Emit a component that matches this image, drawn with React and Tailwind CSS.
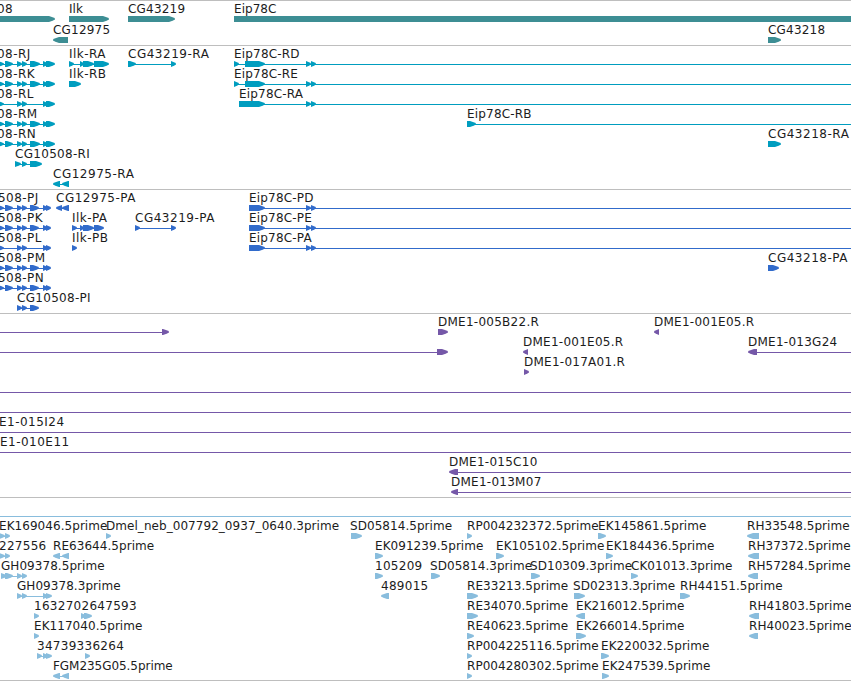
import clsx from "clsx";

const VIEW_END = 851;

// x: label position, blocks: [start, end], line: connector between the blocks
const feature = (label, x, blocks = [], options = {}) => ({
  label,
  x,
  blocks,
  ...options,
});

const eip = { line: [235, VIEW_END] };
const left = { reverse: true };

const rnaExons = [[-3, 4], [5, 13], [17, 22], [22, 27], [30, 40], [43, 48], [46, 55]];
const rnaShort = [[-3, 4], [17, 22], [22, 27], [43, 48], [46, 55]];
const cdsExons = [[-3, 4], [5, 13], [17, 22], [22, 27], [30, 39], [43, 48], [46, 51]];
const cdsShort = [[-3, 4], [17, 22], [22, 27], [43, 48], [46, 51]];

const tracks = [
  {
    id: "genes",
    color: "text-[#3d8e94]",
    height: "h-[45px]",
    rowHeight: "h-[21px]",
    rows: [
      [
        feature("08", -3, [[-5, 55]]),
        feature("Ilk", 69, [[69, 109]]),
        feature("CG43219", 128, [[128, 175]]),
        feature("Eip78C", 234, [[234, 870]]),
      ],
      [
        feature("CG12975", 53, [[53, 68]], left),
        feature("CG43218", 768, [[768, 781]]),
      ],
    ],
  },
  {
    id: "transcripts",
    color: "text-[#009dbf]",
    height: "h-36",
    rows: [
      [
        feature("08-RJ", -3, rnaExons, { line: [0, 50] }),
        feature("Ilk-RA", 69, [[69, 74], [80, 84], [83, 94], [94, 109]], { line: [69, 105] }),
        feature("CG43219-RA", 128, [[128, 136], [171, 176]], { line: [128, 173] }),
        feature("Eip78C-RD", 234, [[234, 239], [245, 265], [306, 311], [311, 316]], eip),
      ],
      [
        feature("08-RK", -3, rnaExons, { line: [0, 50] }),
        feature("Ilk-RB", 69, [[69, 81]]),
        feature("Eip78C-RE", 234, [[234, 239], [245, 265], [306, 311], [311, 316]], eip),
      ],
      [
        feature("08-RL", -3, rnaShort, { line: [0, 50] }),
        feature("Eip78C-RA", 239, [[239, 265], [306, 311], [311, 316]], { line: [240, VIEW_END] }),
      ],
      [
        feature("08-RM", -3, rnaExons, { line: [0, 50] }),
        feature("Eip78C-RB", 467, [[467, 476]], { line: [468, VIEW_END] }),
      ],
      [
        feature("08-RN", -3, rnaExons, { line: [0, 50] }),
        feature("CG43218-RA", 768, [[768, 781]]),
      ],
      [feature("CG10508-RI", 15, [[15, 21], [22, 27], [30, 42]], { line: [15, 38] })],
      [feature("CG12975-RA", 53, [[53, 60], [62, 69]], { ...left, line: [56, 68] })],
    ],
  },
  {
    id: "proteins",
    color: "text-[#316bcb]",
    height: "h-[124px]",
    rows: [
      [
        feature("508-PJ", -2, cdsExons, { line: [0, 48] }),
        feature("CG12975-PA", 56, [[56, 62], [62, 69]], { ...left, line: [58, 68] }),
        feature("Eip78C-PD", 249, [[249, 265], [306, 311], [311, 316]], { line: [250, VIEW_END] }),
      ],
      [
        feature("508-PK", -2, cdsExons, { line: [0, 48] }),
        feature("Ilk-PA", 72, [[72, 77], [80, 84], [83, 94], [94, 104]], { line: [72, 100] }),
        feature("CG43219-PA", 135, [[135, 140], [171, 176]], { line: [135, 173] }),
        feature("Eip78C-PE", 249, [[249, 265], [306, 311], [311, 316]], { line: [250, VIEW_END] }),
      ],
      [
        feature("508-PL", -2, cdsShort, { line: [0, 48] }),
        feature("Ilk-PB", 72, [[72, 77]]),
        feature("Eip78C-PA", 249, [[249, 265], [306, 311], [311, 316]], { line: [250, VIEW_END] }),
      ],
      [
        feature("508-PM", -2, cdsExons, { line: [0, 48] }),
        feature("CG43218-PA", 768, [[768, 779]]),
      ],
      [feature("508-PN", -2, cdsExons, { line: [0, 48] })],
      [feature("CG10508-PI", 17, [[17, 22], [22, 27], [30, 39]], { line: [17, 36] })],
    ],
  },
  {
    id: "clones",
    color: "text-[#7558a8]",
    height: "h-[184px]",
    rows: [
      [
        feature("", 0, [[162, 169]], { line: [0, 165] }),
        feature("DME1-005B22.R", 438, [[438, 448]]),
        feature("DME1-001E05.R", 654, [[654, 659]], left),
      ],
      [
        feature("", 0, [[437, 448]], { line: [0, 440] }),
        feature("DME1-001E05.R", 523, [[523, 528]], left),
        feature("DME1-013G24", 748, [[748, 757]], { ...left, line: [752, VIEW_END] }),
      ],
      [feature("DME1-017A01.R", 524, [[524, 529]])],
      [feature("", 0, [], { line: [0, VIEW_END] })],
      [feature("", 0, [], { line: [0, VIEW_END] })],
      [feature("E1-015I24", -1, [], { line: [0, VIEW_END] })],
      [feature("E1-010E11", 0, [], { line: [0, VIEW_END] })],
      [feature("DME1-015C10", 449, [[449, 458]], { ...left, line: [452, VIEW_END] })],
      [feature("DME1-013M07", 451, [[451, 458]], { ...left, line: [454, VIEW_END] })],
    ],
  },
  {
    id: "ests",
    color: "text-[#89bddd]",
    height: "h-[184px]",
    rows: [
      [feature("", 0, [], { line: [0, VIEW_END] })],
      [
        feature("EK169046.5prime", -1, [[-1, 5], [5, 10]], { line: [0, 8] }),
        feature("Dmel_neb_007792_0937_0640.3prime", 106, [[106, 111]]),
        feature("SD05814.5prime", 350, [[351, 362]]),
        feature("RP004232372.5prime", 467, [[467, 472]]),
        feature("EK145861.5prime", 598, [[598, 606]]),
        feature("RH33548.5prime", 747, [[747, 759]], left),
      ],
      [
        feature("227556", -1, [[-1, 5], [5, 10]], { line: [0, 8] }),
        feature("RE63644.5prime", 53, [[53, 60], [62, 69]], { ...left, line: [56, 68] }),
        feature("EK091239.5prime", 375, [[375, 383]]),
        feature("EK105102.5prime", 496, [[496, 504]]),
        feature("EK184436.5prime", 606, [[606, 613]]),
        feature("RH37372.5prime", 748, [[748, 759]], left),
      ],
      [
        feature("GH09378.5prime", 1, [[1, 7], [5, 13], [17, 22], [22, 27]], { line: [2, 25] }),
        feature("105209", 375, [[375, 383]]),
        feature("SD05814.3prime", 430, [[431, 440]]),
        feature("SD10309.3prime", 530, [[531, 540]]),
        feature("CK01013.3prime", 631, [[631, 638]]),
        feature("RH57284.5prime", 748, [[748, 758]], left),
      ],
      [
        feature("GH09378.3prime", 17, [[17, 22], [22, 27], [43, 48], [46, 52]], { line: [17, 49] }),
        feature("489015", 381, [[381, 389]], left),
        feature("RE33213.5prime", 467, [[467, 478]]),
        feature("SD02313.3prime", 573, [[574, 585]]),
        feature("RH44151.5prime", 680, [[680, 690]]),
      ],
      [
        feature("1632702647593", 34, [[34, 39], [81, 86], [84, 92]]),
        feature("RE34070.5prime", 467, [[467, 478]]),
        feature("EK216012.5prime", 576, [[576, 585]], left),
        feature("RH41803.5prime", 749, [[749, 759]], left),
      ],
      [
        feature("EK117040.5prime", 34, [[34, 39]]),
        feature("RE40623.5prime", 467, [[467, 474]]),
        feature("EK266014.5prime", 576, [[576, 586]]),
        feature("RH40023.5prime", 749, [[749, 758]], left),
      ],
      [
        feature("34739336264", 37, [[37, 42], [43, 48], [46, 52], [85, 90]], { line: [37, 49] }),
        feature("RP004225116.5prime", 467, [[467, 472]]),
        feature("EK220032.5prime", 601, [[601, 609]]),
      ],
      [
        feature("FGM235G05.5prime", 53, [[53, 60], [62, 69]], { ...left, line: [56, 68] }),
        feature("RP004280302.5prime", 467, [[467, 472]]),
        feature("EK247539.5prime", 602, [[602, 609]]),
      ],
    ],
  },
];

function arrowPoints([start, end], reverse) {
  const tip = Math.min(end - start, 6);
  const base = reverse ? end : start;
  const point = reverse ? start : end;
  const sign = reverse ? -1 : 1;
  const neck = point - sign * tip;
  const shoulder = point - sign * tip * 0.4;

  return [
    [base, 0],
    [neck, 0],
    [shoulder, 1.3],
    [point, 2.5],
    [point, 3.5],
    [shoulder, 4.7],
    [neck, 6],
    [base, 6],
  ].join(" ");
}

function labelTracking(label) {
  if (/^CG\d+-[RP]I$/.test(label)) return "tracking-[0.3px]";
  if (/^CG\d+-/.test(label)) return "tracking-[0.52px]";
  if (/^CG/.test(label)) return "tracking-[0.2px]";
  if (/^(Ilk|08|508)-/.test(label)) return "tracking-[0.45px]";
  if (/^Eip78C-/.test(label)) return "tracking-[0.18px]";
  if (/^E1-/.test(label)) return "tracking-[0.48px]";
  if (/^DME1-/.test(label)) return "tracking-[0.26px]";
  if (/^\d+$/.test(label)) return "tracking-[0.28px]";
  if (/^FGM/.test(label)) return "tracking-[-0.05px]";
  return "tracking-[0.05px]";
}

function Glyphs({ features }) {
  return (
    <svg className="absolute top-3.5 left-0" width={VIEW_END} height="6" fill="currentColor">
      {features.map(({ x, blocks, line, reverse }, index) => (
        <g key={`${x}-${index}`}>
          {line && <rect x={line[0]} y="3" width={line[1] - line[0]} height="1" />}
          {blocks.map((block) => (
            <polygon key={block[0]} points={arrowPoints(block, reverse)} />
          ))}
        </g>
      ))}
    </svg>
  );
}

function Row({ features, height = "h-5" }) {
  return (
    <div className={clsx("relative", height)}>
      <Glyphs features={features} />
      {features.map(
        ({ label, x }) =>
          label && (
            <span
              key={`${label}-${x}`}
              className={clsx(
                "absolute top-0 leading-[14px] whitespace-nowrap text-[#1c1c1c]",
                labelTracking(label),
              )}
              style={{ left: x }}
            >
              {label}
            </span>
          ),
      )}
    </div>
  );
}

export default function App() {
  return (
    <div className="h-[681px] w-[851px] overflow-hidden border-b border-[#bebebe] bg-white font-['DejaVu_Sans',sans-serif] text-[12px]">
      {tracks.map(({ id, color, height, rowHeight, rows }) => (
        <section key={id} className={clsx("border-t border-[#bebebe] pt-px", height, color)}>
          {rows.map((features, index) => (
            <Row key={index} features={features} height={rowHeight} />
          ))}
        </section>
      ))}
    </div>
  );
}
